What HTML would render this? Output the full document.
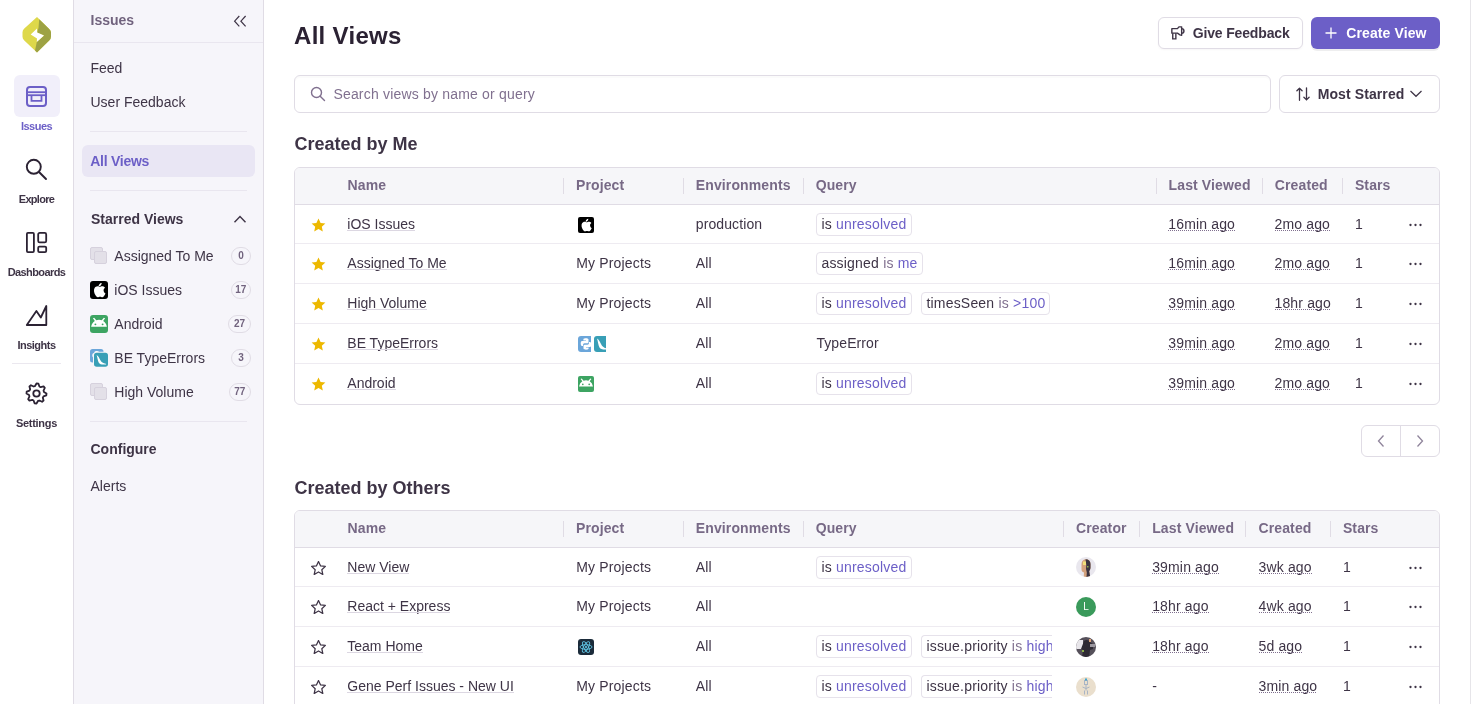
<!DOCTYPE html>
<html><head><meta charset="utf-8">
<style>
*{box-sizing:border-box;margin:0;padding:0}
html,body{width:1471px;height:704px;overflow:hidden;background:#fff;font-family:"Liberation Sans",sans-serif;color:#2B2233;-webkit-font-smoothing:antialiased}
.a{position:absolute;display:block}
.t{position:absolute;white-space:nowrap}
</style></head><body><div id="w" style="position:absolute;left:0;top:0;width:1471px;height:704px;will-change:transform">
<div class="a" style="left:0px;top:0px;width:73px;height:704px;background:#fff"></div>
<div class="a" style="left:73px;top:0px;width:1px;height:704px;background:#E0DCE5"></div>
<svg class="a" style="left:22px;top:17px" width="30" height="36" viewBox="0 0 30 36"><path d="M15 0L2.3 11.6Q0.5 13.3 0.5 15.3V19.8Q0.5 21.8 2.3 23.5L15 35.6L27.2 23.6Q29 21.8 29 19.6V15.6Q29 13.6 27.2 11.9Z" fill="#DED84A"/><path d="M17.2 2.2L27.2 11.9Q29 13.6 29 15.6V19.6Q29 21.8 27.2 23.6L15 35.6 13 33.5 14.8 25 22 18.5 15 15.4 16.5 11Z" fill="#9DA243"/><polygon points="15,11.4 15.2,15.4 22,18.5 14.8,25 15,21.6 8.7,17.5" fill="#fff"/></svg>
<div class="a" style="left:14px;top:75px;width:46px;height:42px;background:#F1EFFA;border-radius:6px"></div>
<svg class="a" style="left:25px;top:85px" width="23" height="23" viewBox="0 0 23 23"><rect x="2" y="2" width="19" height="19" rx="3" fill="none" stroke="#6C5FC7" stroke-width="2"/><line x1="2" y1="7.2" x2="21" y2="7.2" stroke="#6C5FC7" stroke-width="1.8"/><line x1="2" y1="10.2" x2="21" y2="10.2" stroke="#6C5FC7" stroke-width="1.8"/><polyline points="6.5,10.2 6.5,15.8 16.5,15.8 16.5,10.2" fill="none" stroke="#6C5FC7" stroke-width="1.8"/></svg>
<div class="t" style="left:0.0px;width:73px;text-align:center;top:119px;font-size:11px;line-height:15px;color:#6C5FC7;font-weight:bold;letter-spacing:-0.5px;">Issues</div>
<svg class="a" style="left:25px;top:158px" width="23" height="23" viewBox="0 0 23 23"><circle cx="8.8" cy="8.8" r="7" fill="none" stroke="#2B2233" stroke-width="1.9"/><line x1="14" y1="14" x2="21" y2="21" stroke="#2B2233" stroke-width="1.9" stroke-linecap="round"/></svg>
<div class="t" style="left:0.0px;width:73px;text-align:center;top:192px;font-size:11px;line-height:15px;color:#3E3446;font-weight:bold;letter-spacing:-0.7px;">Explore</div>
<svg class="a" style="left:25px;top:231px" width="23" height="23" viewBox="0 0 23 23"><rect x="1.9" y="1.9" width="7" height="19.2" rx="1" fill="none" stroke="#2B2233" stroke-width="1.8"/><rect x="13.2" y="1.9" width="8" height="9.5" rx="1.5" fill="none" stroke="#2B2233" stroke-width="1.8"/><rect x="13.2" y="15.6" width="8" height="5.5" rx="1.2" fill="none" stroke="#2B2233" stroke-width="1.8"/></svg>
<div class="t" style="left:0.0px;width:73px;text-align:center;top:265px;font-size:11px;line-height:15px;color:#3E3446;font-weight:bold;letter-spacing:-0.6px;">Dashboards</div>
<svg class="a" style="left:25px;top:304px" width="23" height="23" viewBox="0 0 23 23"><polygon points="1.8,21 11.4,7 15.8,13.5 21.3,2 21.3,21" fill="none" stroke="#2B2233" stroke-width="1.8" stroke-linejoin="round"/></svg>
<div class="t" style="left:0.0px;width:73px;text-align:center;top:338px;font-size:11px;line-height:15px;color:#3E3446;font-weight:bold;letter-spacing:-0.5px;">Insights</div>
<div class="a" style="left:12px;top:363px;width:49px;height:1px;background:#EBE8EF"></div>
<svg class="a" style="left:25px;top:382px" width="23" height="23" viewBox="0 0 23 23"><polygon points="11.50,1.50 13.45,1.69 14.41,4.48 15.72,5.18 18.57,4.43 19.81,5.94 18.52,8.59 18.95,10.02 21.50,11.50 21.31,13.45 18.52,14.41 17.82,15.72 18.57,18.57 17.06,19.81 14.41,18.52 12.98,18.95 11.50,21.50 9.55,21.31 8.59,18.52 7.28,17.82 4.43,18.57 3.19,17.06 4.48,14.41 4.05,12.98 1.50,11.50 1.69,9.55 4.48,8.59 5.18,7.28 4.43,4.43 5.94,3.19 8.59,4.48 10.02,4.05" fill="none" stroke="#2B2233" stroke-width="1.8" stroke-linejoin="round"/><circle cx="11.5" cy="11.5" r="3.2" fill="none" stroke="#2B2233" stroke-width="1.8"/></svg>
<div class="t" style="left:0.0px;width:73px;text-align:center;top:416px;font-size:11px;line-height:15px;color:#3E3446;font-weight:bold;letter-spacing:-0.3px;">Settings</div>
<div class="a" style="left:74px;top:0px;width:189px;height:704px;background:#F6F5FA"></div>
<div class="a" style="left:263px;top:0px;width:1px;height:704px;background:#E0DCE5"></div>
<div class="t" style="left:90.5px;top:11px;font-size:14px;line-height:18px;color:#71637E;font-weight:bold;">Issues</div>
<svg class="a" style="left:233px;top:14px" width="15" height="14" viewBox="0 0 15 14"><polyline points="6.3,2 1.6,7.2 6.3,12.4" fill="none" stroke="#3E3446" stroke-width="1.2"/><polyline points="12.6,2 7.9,7.2 12.6,12.4" fill="none" stroke="#3E3446" stroke-width="1.2"/></svg>
<div class="a" style="left:74px;top:42px;width:189px;height:1px;background:#E9E6EF"></div>
<div class="t" style="left:90.5px;top:59px;font-size:14px;line-height:18px;color:#3E3446;">Feed</div>
<div class="t" style="left:90.5px;top:93px;font-size:14px;line-height:18px;color:#3E3446;">User Feedback</div>
<div class="a" style="left:90px;top:131px;width:157px;height:1px;background:#E9E6EF"></div>
<div class="a" style="left:82px;top:145px;width:173px;height:32px;background:#E9E6F4;border-radius:6px"></div>
<div class="t" style="left:90.2px;top:152px;font-size:14px;line-height:18px;color:#6C5FC7;font-weight:bold;letter-spacing:-0.25px;">All Views</div>
<div class="a" style="left:90px;top:190px;width:157px;height:1px;background:#E9E6EF"></div>
<div class="t" style="left:91px;top:210px;font-size:14px;line-height:18px;color:#3E3446;font-weight:bold;">Starred Views</div>
<svg class="a" style="left:233px;top:214px" width="14" height="10" viewBox="0 0 14 10"><polyline points="1.5,8.2 7,2.5 12.5,8.2" fill="none" stroke="#3E3446" stroke-width="1.4"/></svg>
<div class="a" style="left:90px;top:247px;width:13px;height:12.5px;background:#E3E0E8;border:1px solid #D6D1DD;border-radius:2px"></div>
<div class="a" style="left:94px;top:251px;width:13px;height:12.5px;background:#E3E0E8;border:1px solid #D6D1DD;border-radius:2px"></div>
<div class="t" style="left:114.3px;top:247px;font-size:14px;line-height:18px;color:#3E3446;">Assigned To Me</div>
<div class="a" style="left:231px;top:247px;width:20px;height:18px;border:1px solid #E0DCE5;border-radius:9px"></div>
<div class="t" style="left:231px;width:20px;text-align:center;top:249px;font-size:10px;line-height:14px;font-weight:bold;color:#71637E">0</div>
<svg class="a" style="left:90px;top:281px" width="18" height="18" viewBox="0 0 18 18"><rect width="18" height="18" rx="3" fill="#000"/><g transform="translate(0.5625,1.3499999999999999) scale(1.0350000000000001)"><path transform="translate(-0.4,0.3)" d="M10.3 2.6c.5-.6.9-1.4.8-2.2-.8 0-1.6.5-2.1 1.1-.5.5-.9 1.3-.8 2.1.8.1 1.6-.4 2.1-1z" fill="#fff"/><path transform="translate(-0.3,-1.6) scale(1.02)" d="M12.6 9.1c0-1.6 1.3-2.4 1.4-2.5-.8-1.1-2-1.3-2.4-1.3-1-.1-2 .6-2.5.6s-1.3-.6-2.2-.6C5.800 5.3 4.700 6 4.100 7c-1.200 2.100-.3 5.200.9 6.900.6.800 1.200 1.700 2.100 1.700.8 0 1.200-.5 2.200-.5s1.300.5 2.200.5c.9 0 1.500-.9 2-1.700.6-.9.9-1.800.9-1.800s-1.800-.7-1.800-3z" fill="#fff"/></g></svg>
<div class="t" style="left:114.3px;top:281px;font-size:14px;line-height:18px;color:#3E3446;">iOS Issues</div>
<div class="a" style="left:230.5px;top:281px;width:20.5px;height:18px;border:1px solid #E0DCE5;border-radius:9px"></div>
<div class="t" style="left:230.5px;width:20.5px;text-align:center;top:283px;font-size:10px;line-height:14px;font-weight:bold;color:#71637E">17</div>
<svg class="a" style="left:90px;top:315px" width="18" height="18" viewBox="0 0 18 18"><rect width="18" height="18" rx="3" fill="#3DA462"/><g transform="scale(1.125)"><path d="M1 10.4Q1.8 6.6 4.3 5.3L2.6 2.9 3.7 2.4 5.6 4.7Q8 3.9 10.4 4.7L12.3 2.4 13.4 2.9 11.7 5.3Q14.2 6.6 15 10.4Z" fill="#fff"/><circle cx="4.8" cy="8.3" r="0.85" fill="#3DA462"/><circle cx="11.2" cy="8.3" r="0.85" fill="#3DA462"/></g></svg>
<div class="t" style="left:114.3px;top:315px;font-size:14px;line-height:18px;color:#3E3446;">Android</div>
<div class="a" style="left:228px;top:315px;width:23px;height:18px;border:1px solid #E0DCE5;border-radius:9px"></div>
<div class="t" style="left:228px;width:23px;text-align:center;top:317px;font-size:10px;line-height:14px;font-weight:bold;color:#71637E">27</div>
<svg class="a" style="left:90px;top:349px" width="18" height="18" viewBox="0 0 18 18"><g><g transform="scale(0.84375)"><rect width="16" height="16" rx="3" fill="#6BA6DA"/><path d="M7.9 2.3c-2.6 0-2.5 1.100-2.500 1.100v1.200h2.600v.4H4.400S2.700 4.800 2.700 7.500s1.500 2.600 1.500 2.600h.9V8.800s0-1.500 1.500-1.500h2.500s1.400 0 1.400-1.400V3.700s.2-1.400-2.600-1.400z" fill="#fff"/><path d="M8.100 13.700c2.600 0 2.500-1.100 2.500-1.100v-1.200H8v-.4h3.600s1.700.2 1.700-2.500-1.500-2.600-1.500-2.600h-.9v1.300s0 1.500-1.500 1.500H6.900s-1.400 0-1.400 1.400v2.200s-.2 1.400 2.600 1.400z" fill="#fff"/></g></g><g transform="translate(4,3.7)"><rect x="-1" y="-1" width="16" height="16" rx="4" fill="#F6F6F9"/><g transform="scale(0.875)"><rect width="16" height="16" rx="3" fill="#389FB6"/><path d="M3 2.5c1 3 1.2 6.500 2.500 9 1 1.800 3.500 2.300 8 2 .5 0 .5-.8 0-.9-3-.3-5-1.500-6.500-4.500C6 6 5 3.500 3 2.500z" fill="#fff"/></g></g></svg>
<div class="t" style="left:114.3px;top:349px;font-size:14px;line-height:18px;color:#3E3446;">BE TypeErrors</div>
<div class="a" style="left:231px;top:349px;width:20px;height:18px;border:1px solid #E0DCE5;border-radius:9px"></div>
<div class="t" style="left:231px;width:20px;text-align:center;top:351px;font-size:10px;line-height:14px;font-weight:bold;color:#71637E">3</div>
<div class="a" style="left:90px;top:383px;width:13px;height:12.5px;background:#E3E0E8;border:1px solid #D6D1DD;border-radius:2px"></div>
<div class="a" style="left:94px;top:387px;width:13px;height:12.5px;background:#E3E0E8;border:1px solid #D6D1DD;border-radius:2px"></div>
<div class="t" style="left:114.3px;top:383px;font-size:14px;line-height:18px;color:#3E3446;">High Volume</div>
<div class="a" style="left:228.5px;top:383px;width:22.5px;height:18px;border:1px solid #E0DCE5;border-radius:9px"></div>
<div class="t" style="left:228.5px;width:22.5px;text-align:center;top:385px;font-size:10px;line-height:14px;font-weight:bold;color:#71637E">77</div>
<div class="a" style="left:90px;top:421px;width:157px;height:1px;background:#E9E6EF"></div>
<div class="t" style="left:90.5px;top:440px;font-size:14px;line-height:18px;color:#3E3446;font-weight:bold;">Configure</div>
<div class="t" style="left:90.5px;top:477px;font-size:14px;line-height:18px;color:#3E3446;">Alerts</div>
<div class="a" style="left:264px;top:0px;width:1207px;height:704px;background:#fff"></div>
<div class="a" style="left:1470px;top:0px;width:1px;height:704px;background:#E6E5E9"></div>
<div class="t" style="left:294px;top:22px;font-size:24px;line-height:28px;color:#2B2233;font-weight:bold;letter-spacing:0.3px;">All Views</div>
<div class="a" style="left:1158px;top:17px;width:145px;height:32px;border:1px solid #E0DCE5;border-radius:6px;background:#fff;box-shadow:0 1px 2px rgba(43,34,51,0.04)"></div>
<svg class="a" style="left:1170px;top:25px" width="16" height="16" viewBox="0 0 16 16"><path d="M1.85 3.65h5.6l1.5-1.8h2.7v8.4l-1.7-.4-2.5-1.7h-5.6z" stroke="#3E3446" stroke-width="1.4" fill="none" stroke-linejoin="round"/><path d="M2.75 8.2v5.7h3.1V8.2" stroke="#3E3446" stroke-width="1.4" fill="none"/><path d="M11.65 3.6a2.3 2.3 0 0 1 0 4.6" stroke="#3E3446" stroke-width="1.4" fill="none"/></svg>
<div class="t" style="left:1192.7px;top:24px;font-size:14px;line-height:18px;color:#3E3446;font-weight:bold;letter-spacing:-0.15px;">Give Feedback</div>
<div class="a" style="left:1311px;top:17px;width:129px;height:32px;background:#6C5FC7;border-radius:6px;box-shadow:0 2px 0 rgba(43,34,51,0.08)"></div>
<svg class="a" style="left:1325px;top:27px" width="12" height="12" viewBox="0 0 12 12"><path d="M6 0.5v11M0.5 6h11" stroke="#fff" stroke-width="1.3"/></svg>
<div class="t" style="left:1346.3px;top:24px;font-size:14px;line-height:18px;color:#fff;font-weight:bold;letter-spacing:0.1px;">Create View</div>
<div class="a" style="left:294px;top:75px;width:977px;height:38px;border:1px solid #E0DCE5;border-radius:6px;background:#fff;box-shadow:inset 0 2px 0 rgba(43,34,51,0.02)"></div>
<svg class="a" style="left:310px;top:86px" width="16" height="16" viewBox="0 0 16 16"><circle cx="6.5" cy="6.5" r="5" fill="none" stroke="#80708F" stroke-width="1.4"/><line x1="10.2" y1="10.2" x2="14.5" y2="14.5" stroke="#80708F" stroke-width="1.4" stroke-linecap="round"/></svg>
<div class="t" style="left:333.4px;top:85px;font-size:14px;line-height:18px;color:#80708F;letter-spacing:0.19px;">Search views by name or query</div>
<div class="a" style="left:1279px;top:75px;width:161px;height:38px;border:1px solid #E0DCE5;border-radius:6px;background:#fff"></div>
<svg class="a" style="left:1296px;top:87px" width="14" height="14" viewBox="0 0 14 14"><path d="M3.5 13.3V1.2M0.9 3.8L3.5 1.2l2.6 2.6" stroke="#3E3446" stroke-width="1.3" fill="none" stroke-linecap="round" stroke-linejoin="round"/><path d="M10.5 0.8v12.1M7.9 10.3l2.6 2.6 2.6-2.6" stroke="#3E3446" stroke-width="1.3" fill="none" stroke-linecap="round" stroke-linejoin="round"/></svg>
<div class="t" style="left:1317.7px;top:85px;font-size:14px;line-height:18px;color:#3E3446;font-weight:bold;letter-spacing:0.1px;">Most Starred</div>
<svg class="a" style="left:1409px;top:89px" width="14" height="9" viewBox="0 0 14 9"><polyline points="1.5,2 7,7.3 12.5,2" fill="none" stroke="#3E3446" stroke-width="1.2"/></svg>
<div class="a" style="left:294px;top:167px;width:1146px;height:238px;border:1px solid #E0DCE5;border-radius:6px;background:#fff"></div>
<div class="a" style="left:295px;top:168px;width:1144px;height:36px;background:#F6F6F9;border-radius:5px 5px 0 0"></div>
<div class="a" style="left:295px;top:204px;width:1144px;height:1px;background:#E0DCE5"></div>
<div class="a" style="left:295px;top:243px;width:1144px;height:1px;background:#EEEBF1"></div>
<div class="a" style="left:295px;top:283px;width:1144px;height:1px;background:#EEEBF1"></div>
<div class="a" style="left:295px;top:323px;width:1144px;height:1px;background:#EEEBF1"></div>
<div class="a" style="left:295px;top:363px;width:1144px;height:1px;background:#EEEBF1"></div>
<div class="a" style="left:563px;top:178px;width:1px;height:16px;background:#E0DCE5"></div>
<div class="a" style="left:683px;top:178px;width:1px;height:16px;background:#E0DCE5"></div>
<div class="a" style="left:803px;top:178px;width:1px;height:16px;background:#E0DCE5"></div>
<div class="a" style="left:1156px;top:178px;width:1px;height:16px;background:#E0DCE5"></div>
<div class="a" style="left:1262px;top:178px;width:1px;height:16px;background:#E0DCE5"></div>
<div class="a" style="left:1342px;top:178px;width:1px;height:16px;background:#E0DCE5"></div>
<div class="t" style="left:347.5px;top:176px;font-size:14px;line-height:18px;color:#776986;font-weight:bold;letter-spacing:0.12px;">Name</div>
<div class="t" style="left:576px;top:176px;font-size:14px;line-height:18px;color:#776986;font-weight:bold;letter-spacing:0.12px;">Project</div>
<div class="t" style="left:695.8px;top:176px;font-size:14px;line-height:18px;color:#776986;font-weight:bold;letter-spacing:0.12px;">Environments</div>
<div class="t" style="left:815.7px;top:176px;font-size:14px;line-height:18px;color:#776986;font-weight:bold;letter-spacing:0.12px;">Query</div>
<div class="t" style="left:1168.6px;top:176px;font-size:14px;line-height:18px;color:#776986;font-weight:bold;letter-spacing:0.12px;">Last Viewed</div>
<div class="t" style="left:1274.8px;top:176px;font-size:14px;line-height:18px;color:#776986;font-weight:bold;letter-spacing:0.12px;">Created</div>
<div class="t" style="left:1354.9px;top:176px;font-size:14px;line-height:18px;color:#776986;font-weight:bold;letter-spacing:0.12px;">Stars</div>
<svg class="a" style="left:310.8px;top:218px" width="15" height="14" viewBox="0 0 15 14"><path d="M7.5 0.4l2.1 4.5 4.8.5-3.6 3.3 1 4.8-4.3-2.5-4.3 2.5 1-4.8L.6 5.4l4.8-.5z" fill="#EDB800"/></svg>
<div class="t" style="left:347.3px;top:215px;font-size:14px;line-height:18px;color:#3E3446">iOS Issues<div style="position:absolute;left:0;right:0;top:15px;height:1px;background:#DCD7E2"></div></div>
<svg class="a" style="left:578px;top:217px" width="16" height="16" viewBox="0 0 16 16"><rect width="16" height="16" rx="2" fill="#000"/><g transform="translate(0.5,1.2) scale(0.92)"><path transform="translate(-0.4,0.3)" d="M10.3 2.6c.5-.6.9-1.4.8-2.2-.8 0-1.6.5-2.1 1.1-.5.5-.9 1.3-.8 2.1.8.1 1.6-.4 2.1-1z" fill="#fff"/><path transform="translate(-0.3,-1.6) scale(1.02)" d="M12.6 9.1c0-1.6 1.3-2.4 1.4-2.5-.8-1.1-2-1.3-2.4-1.3-1-.1-2 .6-2.5.6s-1.3-.6-2.2-.6C5.800 5.3 4.700 6 4.100 7c-1.200 2.100-.3 5.200.9 6.900.6.800 1.200 1.700 2.100 1.700.8 0 1.200-.5 2.200-.5s1.300.5 2.200.5c.9 0 1.500-.9 2-1.700.6-.9.9-1.800.9-1.800s-1.800-.7-1.800-3z" fill="#fff"/></g></svg>
<div class="t" style="left:695.8px;top:215px;font-size:14px;line-height:18px;color:#3E3446;letter-spacing:0.1px;">production</div>
<div class="t" style="left:816.4px;top:213px;height:23px;padding:0 4px;border:1px solid #E6E2EB;border-radius:4px;font-size:14px;line-height:21px;color:#3E3446;letter-spacing:0.2px;"><span style="color:#3E3446">is</span><span style="color:#6C5FC7"> unresolved</span></div>
<div class="t" style="left:1168.3px;top:215px;font-size:14px;line-height:18px;color:#3E3446;letter-spacing:0.15px">16min ago<div style="position:absolute;left:0;right:0;top:15px;height:1px;background-image:linear-gradient(to right,#80708F 50%,transparent 50%);background-size:2px 1px"></div></div>
<div class="t" style="left:1274.5px;top:215px;font-size:14px;line-height:18px;color:#3E3446;letter-spacing:0.15px">2mo ago<div style="position:absolute;left:0;right:0;top:15px;height:1px;background-image:linear-gradient(to right,#80708F 50%,transparent 50%);background-size:2px 1px"></div></div>
<div class="t" style="left:1355px;top:215px;font-size:14px;line-height:18px;color:#3E3446;">1</div>
<svg class="a" style="left:1409px;top:222.5px" width="13" height="4" viewBox="0 0 13 4"><circle cx="1.5" cy="2" r="1.15" fill="#3E3446"/><circle cx="6.5" cy="2" r="1.15" fill="#3E3446"/><circle cx="11.5" cy="2" r="1.15" fill="#3E3446"/></svg>
<svg class="a" style="left:310.8px;top:257px" width="15" height="14" viewBox="0 0 15 14"><path d="M7.5 0.4l2.1 4.5 4.8.5-3.6 3.3 1 4.8-4.3-2.5-4.3 2.5 1-4.8L.6 5.4l4.8-.5z" fill="#EDB800"/></svg>
<div class="t" style="left:347.3px;top:254px;font-size:14px;line-height:18px;color:#3E3446">Assigned To Me<div style="position:absolute;left:0;right:0;top:15px;height:1px;background:#DCD7E2"></div></div>
<div class="t" style="left:576.3px;top:254px;font-size:14px;line-height:18px;color:#3E3446;letter-spacing:0.15px;">My Projects</div>
<div class="t" style="left:695.8px;top:254px;font-size:14px;line-height:18px;color:#3E3446;letter-spacing:0.1px;">All</div>
<div class="t" style="left:816.4px;top:252px;height:23px;padding:0 4px;border:1px solid #E6E2EB;border-radius:4px;font-size:14px;line-height:21px;color:#3E3446;letter-spacing:0.2px;"><span style="color:#3E3446">assigned</span><span style="color:#80708F"> is</span><span style="color:#6C5FC7"> me</span></div>
<div class="t" style="left:1168.3px;top:254px;font-size:14px;line-height:18px;color:#3E3446;letter-spacing:0.15px">16min ago<div style="position:absolute;left:0;right:0;top:15px;height:1px;background-image:linear-gradient(to right,#80708F 50%,transparent 50%);background-size:2px 1px"></div></div>
<div class="t" style="left:1274.5px;top:254px;font-size:14px;line-height:18px;color:#3E3446;letter-spacing:0.15px">2mo ago<div style="position:absolute;left:0;right:0;top:15px;height:1px;background-image:linear-gradient(to right,#80708F 50%,transparent 50%);background-size:2px 1px"></div></div>
<div class="t" style="left:1355px;top:254px;font-size:14px;line-height:18px;color:#3E3446;">1</div>
<svg class="a" style="left:1409px;top:262.0px" width="13" height="4" viewBox="0 0 13 4"><circle cx="1.5" cy="2" r="1.15" fill="#3E3446"/><circle cx="6.5" cy="2" r="1.15" fill="#3E3446"/><circle cx="11.5" cy="2" r="1.15" fill="#3E3446"/></svg>
<svg class="a" style="left:310.8px;top:297px" width="15" height="14" viewBox="0 0 15 14"><path d="M7.5 0.4l2.1 4.5 4.8.5-3.6 3.3 1 4.8-4.3-2.5-4.3 2.5 1-4.8L.6 5.4l4.8-.5z" fill="#EDB800"/></svg>
<div class="t" style="left:347.3px;top:294px;font-size:14px;line-height:18px;color:#3E3446">High Volume<div style="position:absolute;left:0;right:0;top:15px;height:1px;background:#DCD7E2"></div></div>
<div class="t" style="left:576.3px;top:294px;font-size:14px;line-height:18px;color:#3E3446;letter-spacing:0.15px;">My Projects</div>
<div class="t" style="left:695.8px;top:294px;font-size:14px;line-height:18px;color:#3E3446;letter-spacing:0.1px;">All</div>
<div class="t" style="left:816.4px;top:292px;height:23px;padding:0 4px;border:1px solid #E6E2EB;border-radius:4px;font-size:14px;line-height:21px;color:#3E3446;letter-spacing:0.2px;"><span style="color:#3E3446">is</span><span style="color:#6C5FC7"> unresolved</span></div>
<div class="t" style="left:921.4px;top:292px;height:23px;padding:0 4px;border:1px solid #E6E2EB;border-radius:4px;font-size:14px;line-height:21px;color:#3E3446;letter-spacing:0.2px;"><span style="color:#3E3446">timesSeen</span><span style="color:#80708F"> is</span><span style="color:#6C5FC7"> &gt;100</span></div>
<div class="t" style="left:1168.3px;top:294px;font-size:14px;line-height:18px;color:#3E3446;letter-spacing:0.15px">39min ago<div style="position:absolute;left:0;right:0;top:15px;height:1px;background-image:linear-gradient(to right,#80708F 50%,transparent 50%);background-size:2px 1px"></div></div>
<div class="t" style="left:1274.5px;top:294px;font-size:14px;line-height:18px;color:#3E3446;letter-spacing:0.15px">18hr ago<div style="position:absolute;left:0;right:0;top:15px;height:1px;background-image:linear-gradient(to right,#80708F 50%,transparent 50%);background-size:2px 1px"></div></div>
<div class="t" style="left:1355px;top:294px;font-size:14px;line-height:18px;color:#3E3446;">1</div>
<svg class="a" style="left:1409px;top:302.0px" width="13" height="4" viewBox="0 0 13 4"><circle cx="1.5" cy="2" r="1.15" fill="#3E3446"/><circle cx="6.5" cy="2" r="1.15" fill="#3E3446"/><circle cx="11.5" cy="2" r="1.15" fill="#3E3446"/></svg>
<svg class="a" style="left:310.8px;top:337px" width="15" height="14" viewBox="0 0 15 14"><path d="M7.5 0.4l2.1 4.5 4.8.5-3.6 3.3 1 4.8-4.3-2.5-4.3 2.5 1-4.8L.6 5.4l4.8-.5z" fill="#EDB800"/></svg>
<div class="t" style="left:347.3px;top:334px;font-size:14px;line-height:18px;color:#3E3446">BE TypeErrors<div style="position:absolute;left:0;right:0;top:15px;height:1px;background:#DCD7E2"></div></div>
<svg class="a" style="left:578px;top:336px" width="28" height="16" viewBox="0 0 28 16"><g transform="scale(1.0)"><rect width="16" height="16" rx="3" fill="#6BA6DA"/><path d="M7.9 2.3c-2.6 0-2.5 1.100-2.500 1.100v1.200h2.600v.4H4.400S2.700 4.800 2.700 7.500s1.500 2.600 1.500 2.600h.9V8.800s0-1.500 1.500-1.500h2.500s1.400 0 1.400-1.400V3.700s.2-1.400-2.600-1.400z" fill="#fff"/><path d="M8.100 13.700c2.600 0 2.500-1.100 2.500-1.100v-1.200H8v-.4h3.600s1.700.2 1.700-2.500-1.500-2.600-1.500-2.600h-.9v1.300s0 1.500-1.500 1.500H6.900s-1.400 0-1.400 1.400v2.200s-.2 1.400 2.600 1.400z" fill="#fff"/></g><g transform="translate(16,0)"><g transform="scale(1.0)"><rect width="16" height="16" rx="3" fill="#389FB6"/><path d="M3 2.5c1 3 1.2 6.500 2.500 9 1 1.800 3.500 2.300 8 2 .5 0 .5-.8 0-.9-3-.3-5-1.500-6.500-4.500C6 6 5 3.500 3 2.500z" fill="#fff"/></g></g><rect x="13" y="0" width="3" height="16" fill="#fff"/></svg>
<div class="t" style="left:695.8px;top:334px;font-size:14px;line-height:18px;color:#3E3446;letter-spacing:0.1px;">All</div>
<div class="t" style="left:816.4px;top:334px;font-size:14px;line-height:18px;color:#3E3446;letter-spacing:0.1px;">TypeError</div>
<div class="t" style="left:1168.3px;top:334px;font-size:14px;line-height:18px;color:#3E3446;letter-spacing:0.15px">39min ago<div style="position:absolute;left:0;right:0;top:15px;height:1px;background-image:linear-gradient(to right,#80708F 50%,transparent 50%);background-size:2px 1px"></div></div>
<div class="t" style="left:1274.5px;top:334px;font-size:14px;line-height:18px;color:#3E3446;letter-spacing:0.15px">2mo ago<div style="position:absolute;left:0;right:0;top:15px;height:1px;background-image:linear-gradient(to right,#80708F 50%,transparent 50%);background-size:2px 1px"></div></div>
<div class="t" style="left:1355px;top:334px;font-size:14px;line-height:18px;color:#3E3446;">1</div>
<svg class="a" style="left:1409px;top:342.0px" width="13" height="4" viewBox="0 0 13 4"><circle cx="1.5" cy="2" r="1.15" fill="#3E3446"/><circle cx="6.5" cy="2" r="1.15" fill="#3E3446"/><circle cx="11.5" cy="2" r="1.15" fill="#3E3446"/></svg>
<svg class="a" style="left:310.8px;top:377px" width="15" height="14" viewBox="0 0 15 14"><path d="M7.5 0.4l2.1 4.5 4.8.5-3.6 3.3 1 4.8-4.3-2.5-4.3 2.5 1-4.8L.6 5.4l4.8-.5z" fill="#EDB800"/></svg>
<div class="t" style="left:347.3px;top:374px;font-size:14px;line-height:18px;color:#3E3446">Android<div style="position:absolute;left:0;right:0;top:15px;height:1px;background:#DCD7E2"></div></div>
<svg class="a" style="left:578px;top:376px" width="16" height="16" viewBox="0 0 16 16"><rect width="16" height="16" rx="2" fill="#3DA462"/><g transform="scale(1.0)"><path d="M1 10.4Q1.8 6.6 4.3 5.3L2.6 2.9 3.7 2.4 5.6 4.7Q8 3.9 10.4 4.7L12.3 2.4 13.4 2.9 11.7 5.3Q14.2 6.6 15 10.4Z" fill="#fff"/><circle cx="4.8" cy="8.3" r="0.85" fill="#3DA462"/><circle cx="11.2" cy="8.3" r="0.85" fill="#3DA462"/></g></svg>
<div class="t" style="left:695.8px;top:374px;font-size:14px;line-height:18px;color:#3E3446;letter-spacing:0.1px;">All</div>
<div class="t" style="left:816.4px;top:372px;height:23px;padding:0 4px;border:1px solid #E6E2EB;border-radius:4px;font-size:14px;line-height:21px;color:#3E3446;letter-spacing:0.2px;"><span style="color:#3E3446">is</span><span style="color:#6C5FC7"> unresolved</span></div>
<div class="t" style="left:1168.3px;top:374px;font-size:14px;line-height:18px;color:#3E3446;letter-spacing:0.15px">39min ago<div style="position:absolute;left:0;right:0;top:15px;height:1px;background-image:linear-gradient(to right,#80708F 50%,transparent 50%);background-size:2px 1px"></div></div>
<div class="t" style="left:1274.5px;top:374px;font-size:14px;line-height:18px;color:#3E3446;letter-spacing:0.15px">2mo ago<div style="position:absolute;left:0;right:0;top:15px;height:1px;background-image:linear-gradient(to right,#80708F 50%,transparent 50%);background-size:2px 1px"></div></div>
<div class="t" style="left:1355px;top:374px;font-size:14px;line-height:18px;color:#3E3446;">1</div>
<svg class="a" style="left:1409px;top:382.0px" width="13" height="4" viewBox="0 0 13 4"><circle cx="1.5" cy="2" r="1.15" fill="#3E3446"/><circle cx="6.5" cy="2" r="1.15" fill="#3E3446"/><circle cx="11.5" cy="2" r="1.15" fill="#3E3446"/></svg>
<div class="a" style="left:1361px;top:425px;width:79px;height:32px;border:1px solid #E0DCE5;border-radius:6px;background:#fff"></div>
<div class="a" style="left:1400px;top:426px;width:1px;height:30px;background:#E0DCE5"></div>
<svg class="a" style="left:1376px;top:434px" width="10" height="14" viewBox="0 0 10 14"><polyline points="7.5,1.5 2.5,7 7.5,12.5" fill="none" stroke="#8F849B" stroke-width="1.3"/></svg>
<svg class="a" style="left:1415px;top:434px" width="10" height="14" viewBox="0 0 10 14"><polyline points="2.5,1.5 7.5,7 2.5,12.5" fill="none" stroke="#8F849B" stroke-width="1.3"/></svg>
<div class="t" style="left:294.5px;top:133px;font-size:18px;line-height:22px;color:#3E3446;font-weight:bold;">Created by Me</div>
<div class="t" style="left:294.5px;top:477px;font-size:18px;line-height:22px;color:#3E3446;font-weight:bold;">Created by Others</div>
<div class="a" style="left:294px;top:510px;width:1146px;height:238px;border:1px solid #E0DCE5;border-radius:6px;background:#fff"></div>
<div class="a" style="left:295px;top:511px;width:1144px;height:36px;background:#F6F6F9;border-radius:5px 5px 0 0"></div>
<div class="a" style="left:295px;top:547px;width:1144px;height:1px;background:#E0DCE5"></div>
<div class="a" style="left:295px;top:586px;width:1144px;height:1px;background:#EEEBF1"></div>
<div class="a" style="left:295px;top:626px;width:1144px;height:1px;background:#EEEBF1"></div>
<div class="a" style="left:295px;top:666px;width:1144px;height:1px;background:#EEEBF1"></div>
<div class="a" style="left:295px;top:706px;width:1144px;height:1px;background:#EEEBF1"></div>
<div class="a" style="left:563px;top:521px;width:1px;height:16px;background:#E0DCE5"></div>
<div class="a" style="left:683px;top:521px;width:1px;height:16px;background:#E0DCE5"></div>
<div class="a" style="left:803px;top:521px;width:1px;height:16px;background:#E0DCE5"></div>
<div class="a" style="left:1063px;top:521px;width:1px;height:16px;background:#E0DCE5"></div>
<div class="a" style="left:1139px;top:521px;width:1px;height:16px;background:#E0DCE5"></div>
<div class="a" style="left:1245px;top:521px;width:1px;height:16px;background:#E0DCE5"></div>
<div class="a" style="left:1330px;top:521px;width:1px;height:16px;background:#E0DCE5"></div>
<div class="t" style="left:347.5px;top:519px;font-size:14px;line-height:18px;color:#776986;font-weight:bold;letter-spacing:0.12px;">Name</div>
<div class="t" style="left:576px;top:519px;font-size:14px;line-height:18px;color:#776986;font-weight:bold;letter-spacing:0.12px;">Project</div>
<div class="t" style="left:695.8px;top:519px;font-size:14px;line-height:18px;color:#776986;font-weight:bold;letter-spacing:0.12px;">Environments</div>
<div class="t" style="left:815.7px;top:519px;font-size:14px;line-height:18px;color:#776986;font-weight:bold;letter-spacing:0.12px;">Query</div>
<div class="t" style="left:1076px;top:519px;font-size:14px;line-height:18px;color:#776986;font-weight:bold;letter-spacing:0.12px;">Creator</div>
<div class="t" style="left:1152.2px;top:519px;font-size:14px;line-height:18px;color:#776986;font-weight:bold;letter-spacing:0.12px;">Last Viewed</div>
<div class="t" style="left:1258.5px;top:519px;font-size:14px;line-height:18px;color:#776986;font-weight:bold;letter-spacing:0.12px;">Created</div>
<div class="t" style="left:1342.9px;top:519px;font-size:14px;line-height:18px;color:#776986;font-weight:bold;letter-spacing:0.12px;">Stars</div>
<svg class="a" style="left:310.8px;top:561px" width="15" height="14" viewBox="0 0 15 14"><path d="M7.5 0.4l2.1 4.5 4.8.5-3.6 3.3 1 4.8-4.3-2.5-4.3 2.5 1-4.8L.6 5.4l4.8-.5z" fill="none" stroke="#3E3446" stroke-width="1.25" stroke-linejoin="round"/></svg>
<div class="t" style="left:347.3px;top:558px;font-size:14px;line-height:18px;color:#3E3446">New View<div style="position:absolute;left:0;right:0;top:15px;height:1px;background:#DCD7E2"></div></div>
<div class="t" style="left:576.3px;top:558px;font-size:14px;line-height:18px;color:#3E3446;letter-spacing:0.15px;">My Projects</div>
<div class="t" style="left:695.8px;top:558px;font-size:14px;line-height:18px;color:#3E3446;letter-spacing:0.1px;">All</div>
<div class="t" style="left:816.4px;top:556px;height:23px;padding:0 4px;border:1px solid #E6E2EB;border-radius:4px;font-size:14px;line-height:21px;color:#3E3446;letter-spacing:0.2px;"><span style="color:#3E3446">is</span><span style="color:#6C5FC7"> unresolved</span></div>
<svg class="a" style="left:1076px;top:557.0px" width="20" height="20" viewBox="0 0 20 20"><clipPath id="c1"><circle cx="10" cy="10" r="10"/></clipPath><g clip-path="url(#c1)"><rect width="20" height="20" fill="#E9E7EE"/><path d="M5.500 7c0-3 2-4.800 4.700-4.800s4.300 1.800 4.300 4.800v3.500c0 1.500-.6 2.800-1.300 3.600l1 6h-6.500l.3-4.500c-1.500-.5-2.500-1.500-2.500-3.300z" fill="#D4A27D"/><path d="M9.500 2.200c3 0 5 1.800 5 4.800v3.500c0 1.500-.6 2.800-1.300 3.600l1 6H10.500l.3-4.500-.8-3.500.3-4z" fill="#3A3340"/><rect x="7" y="4.500" width="3" height="3.500" fill="#F0E07A"/><rect x="11" y="9" width="1.500" height="1.500" fill="#8CB04A"/></g></svg>
<div class="t" style="left:1152.2px;top:558px;font-size:14px;line-height:18px;color:#3E3446;letter-spacing:0.15px">39min ago<div style="position:absolute;left:0;right:0;top:15px;height:1px;background-image:linear-gradient(to right,#80708F 50%,transparent 50%);background-size:2px 1px"></div></div>
<div class="t" style="left:1258.5px;top:558px;font-size:14px;line-height:18px;color:#3E3446;letter-spacing:0.15px">3wk ago<div style="position:absolute;left:0;right:0;top:15px;height:1px;background-image:linear-gradient(to right,#80708F 50%,transparent 50%);background-size:2px 1px"></div></div>
<div class="t" style="left:1343px;top:558px;font-size:14px;line-height:18px;color:#3E3446;">1</div>
<svg class="a" style="left:1409px;top:565.5px" width="13" height="4" viewBox="0 0 13 4"><circle cx="1.5" cy="2" r="1.15" fill="#3E3446"/><circle cx="6.5" cy="2" r="1.15" fill="#3E3446"/><circle cx="11.5" cy="2" r="1.15" fill="#3E3446"/></svg>
<svg class="a" style="left:310.8px;top:600px" width="15" height="14" viewBox="0 0 15 14"><path d="M7.5 0.4l2.1 4.5 4.8.5-3.6 3.3 1 4.8-4.3-2.5-4.3 2.5 1-4.8L.6 5.4l4.8-.5z" fill="none" stroke="#3E3446" stroke-width="1.25" stroke-linejoin="round"/></svg>
<div class="t" style="left:347.3px;top:597px;font-size:14px;line-height:18px;color:#3E3446">React + Express<div style="position:absolute;left:0;right:0;top:15px;height:1px;background:#DCD7E2"></div></div>
<div class="t" style="left:576.3px;top:597px;font-size:14px;line-height:18px;color:#3E3446;letter-spacing:0.15px;">My Projects</div>
<div class="t" style="left:695.8px;top:597px;font-size:14px;line-height:18px;color:#3E3446;letter-spacing:0.1px;">All</div>
<div class="a" style="left:1076px;top:596.5px;width:20px;height:20px;background:#3A9A5B;border-radius:50%"></div>
<div class="t" style="left:1076px;width:20px;text-align:center;top:599.5px;font-size:10px;line-height:14px;color:#fff">L</div>
<div class="t" style="left:1152.2px;top:597px;font-size:14px;line-height:18px;color:#3E3446;letter-spacing:0.15px">18hr ago<div style="position:absolute;left:0;right:0;top:15px;height:1px;background-image:linear-gradient(to right,#80708F 50%,transparent 50%);background-size:2px 1px"></div></div>
<div class="t" style="left:1258.5px;top:597px;font-size:14px;line-height:18px;color:#3E3446;letter-spacing:0.15px">4wk ago<div style="position:absolute;left:0;right:0;top:15px;height:1px;background-image:linear-gradient(to right,#80708F 50%,transparent 50%);background-size:2px 1px"></div></div>
<div class="t" style="left:1343px;top:597px;font-size:14px;line-height:18px;color:#3E3446;">1</div>
<svg class="a" style="left:1409px;top:605.0px" width="13" height="4" viewBox="0 0 13 4"><circle cx="1.5" cy="2" r="1.15" fill="#3E3446"/><circle cx="6.5" cy="2" r="1.15" fill="#3E3446"/><circle cx="11.5" cy="2" r="1.15" fill="#3E3446"/></svg>
<svg class="a" style="left:310.8px;top:640px" width="15" height="14" viewBox="0 0 15 14"><path d="M7.5 0.4l2.1 4.5 4.8.5-3.6 3.3 1 4.8-4.3-2.5-4.3 2.5 1-4.8L.6 5.4l4.8-.5z" fill="none" stroke="#3E3446" stroke-width="1.25" stroke-linejoin="round"/></svg>
<div class="t" style="left:347.3px;top:637px;font-size:14px;line-height:18px;color:#3E3446">Team Home<div style="position:absolute;left:0;right:0;top:15px;height:1px;background:#DCD7E2"></div></div>
<svg class="a" style="left:578px;top:639px" width="16" height="16" viewBox="0 0 16 16"><rect width="16" height="16" rx="3" fill="#1B2B3A"/><g fill="none" stroke="#61C8E8" stroke-width="0.9"><ellipse cx="8" cy="8" rx="6" ry="2.3"/><ellipse cx="8" cy="8" rx="6" ry="2.3" transform="rotate(60 8 8)"/><ellipse cx="8" cy="8" rx="6" ry="2.3" transform="rotate(120 8 8)"/></g><circle cx="8" cy="8" r="1.1" fill="#61C8E8"/></svg>
<div class="t" style="left:695.8px;top:637px;font-size:14px;line-height:18px;color:#3E3446;letter-spacing:0.1px;">All</div>
<div class="t" style="left:816.4px;top:635px;height:23px;padding:0 4px;border:1px solid #E6E2EB;border-radius:4px;font-size:14px;line-height:21px;color:#3E3446;letter-spacing:0.2px;"><span style="color:#3E3446">is</span><span style="color:#6C5FC7"> unresolved</span></div>
<div class="t" style="left:921.4px;top:635px;height:23px;padding:0 4px;border:1px solid #E6E2EB;border-radius:4px;font-size:14px;line-height:21px;color:#3E3446;letter-spacing:0.2px;width:131px;overflow:hidden;border-right:none;border-radius:4px 0 0 4px;"><span style="color:#3E3446">issue.priority</span><span style="color:#80708F"> is</span><span style="color:#6C5FC7"> high</span></div>
<svg class="a" style="left:1076px;top:636.5px" width="20" height="20" viewBox="0 0 20 20"><clipPath id="c3"><circle cx="10" cy="10" r="10"/></clipPath><g clip-path="url(#c3)"><rect width="20" height="20" fill="#55505A"/><rect x="0" y="3" width="7" height="9" fill="#E8E6EA"/><path d="M8 4c2-2 5-1 6 1l3 2v5l-3 1-1 8H6l1-8-2-1z" fill="#2E2A33"/><rect x="13" y="2" width="2" height="3" fill="#D9A27A"/><rect x="14" y="7" width="5" height="3" fill="#9C98A0"/><rect x="6" y="13" width="2" height="2" fill="#8CB04A"/></g></svg>
<div class="t" style="left:1152.2px;top:637px;font-size:14px;line-height:18px;color:#3E3446;letter-spacing:0.15px">18hr ago<div style="position:absolute;left:0;right:0;top:15px;height:1px;background-image:linear-gradient(to right,#80708F 50%,transparent 50%);background-size:2px 1px"></div></div>
<div class="t" style="left:1258.5px;top:637px;font-size:14px;line-height:18px;color:#3E3446;letter-spacing:0.15px">5d ago<div style="position:absolute;left:0;right:0;top:15px;height:1px;background-image:linear-gradient(to right,#80708F 50%,transparent 50%);background-size:2px 1px"></div></div>
<div class="t" style="left:1343px;top:637px;font-size:14px;line-height:18px;color:#3E3446;">1</div>
<svg class="a" style="left:1409px;top:645.0px" width="13" height="4" viewBox="0 0 13 4"><circle cx="1.5" cy="2" r="1.15" fill="#3E3446"/><circle cx="6.5" cy="2" r="1.15" fill="#3E3446"/><circle cx="11.5" cy="2" r="1.15" fill="#3E3446"/></svg>
<svg class="a" style="left:310.8px;top:680px" width="15" height="14" viewBox="0 0 15 14"><path d="M7.5 0.4l2.1 4.5 4.8.5-3.6 3.3 1 4.8-4.3-2.5-4.3 2.5 1-4.8L.6 5.4l4.8-.5z" fill="none" stroke="#3E3446" stroke-width="1.25" stroke-linejoin="round"/></svg>
<div class="t" style="left:347.3px;top:677px;font-size:14px;line-height:18px;color:#3E3446">Gene Perf Issues - New UI<div style="position:absolute;left:0;right:0;top:15px;height:1px;background:#DCD7E2"></div></div>
<div class="t" style="left:576.3px;top:677px;font-size:14px;line-height:18px;color:#3E3446;letter-spacing:0.15px;">My Projects</div>
<div class="t" style="left:695.8px;top:677px;font-size:14px;line-height:18px;color:#3E3446;letter-spacing:0.1px;">All</div>
<div class="t" style="left:816.4px;top:675px;height:23px;padding:0 4px;border:1px solid #E6E2EB;border-radius:4px;font-size:14px;line-height:21px;color:#3E3446;letter-spacing:0.2px;"><span style="color:#3E3446">is</span><span style="color:#6C5FC7"> unresolved</span></div>
<div class="t" style="left:921.4px;top:675px;height:23px;padding:0 4px;border:1px solid #E6E2EB;border-radius:4px;font-size:14px;line-height:21px;color:#3E3446;letter-spacing:0.2px;width:131px;overflow:hidden;border-right:none;border-radius:4px 0 0 4px;"><span style="color:#3E3446">issue.priority</span><span style="color:#80708F"> is</span><span style="color:#6C5FC7"> high</span></div>
<svg class="a" style="left:1076px;top:676.5px" width="20" height="20" viewBox="0 0 20 20"><circle cx="10" cy="10" r="10" fill="#EADFCD"/><g fill="none" stroke="#A9B4C4" stroke-width="1"><rect x="8.500" y="3.500" width="3" height="4"/><path d="M10 7.500v6M6.500 10l3.500 1.500 3.500-1.500M8.500 13.500v4M11.500 13.500v4"/></g><rect x="9" y="1.500" width="2" height="2" fill="#3FA6D0"/></svg>
<div class="t" style="left:1152.2px;top:677px;font-size:14px;line-height:18px;color:#3E3446;">-</div>
<div class="t" style="left:1258.5px;top:677px;font-size:14px;line-height:18px;color:#3E3446;letter-spacing:0.15px">3min ago<div style="position:absolute;left:0;right:0;top:15px;height:1px;background-image:linear-gradient(to right,#80708F 50%,transparent 50%);background-size:2px 1px"></div></div>
<div class="t" style="left:1343px;top:677px;font-size:14px;line-height:18px;color:#3E3446;">1</div>
<svg class="a" style="left:1409px;top:685.0px" width="13" height="4" viewBox="0 0 13 4"><circle cx="1.5" cy="2" r="1.15" fill="#3E3446"/><circle cx="6.5" cy="2" r="1.15" fill="#3E3446"/><circle cx="11.5" cy="2" r="1.15" fill="#3E3446"/></svg>
</div></body></html>
